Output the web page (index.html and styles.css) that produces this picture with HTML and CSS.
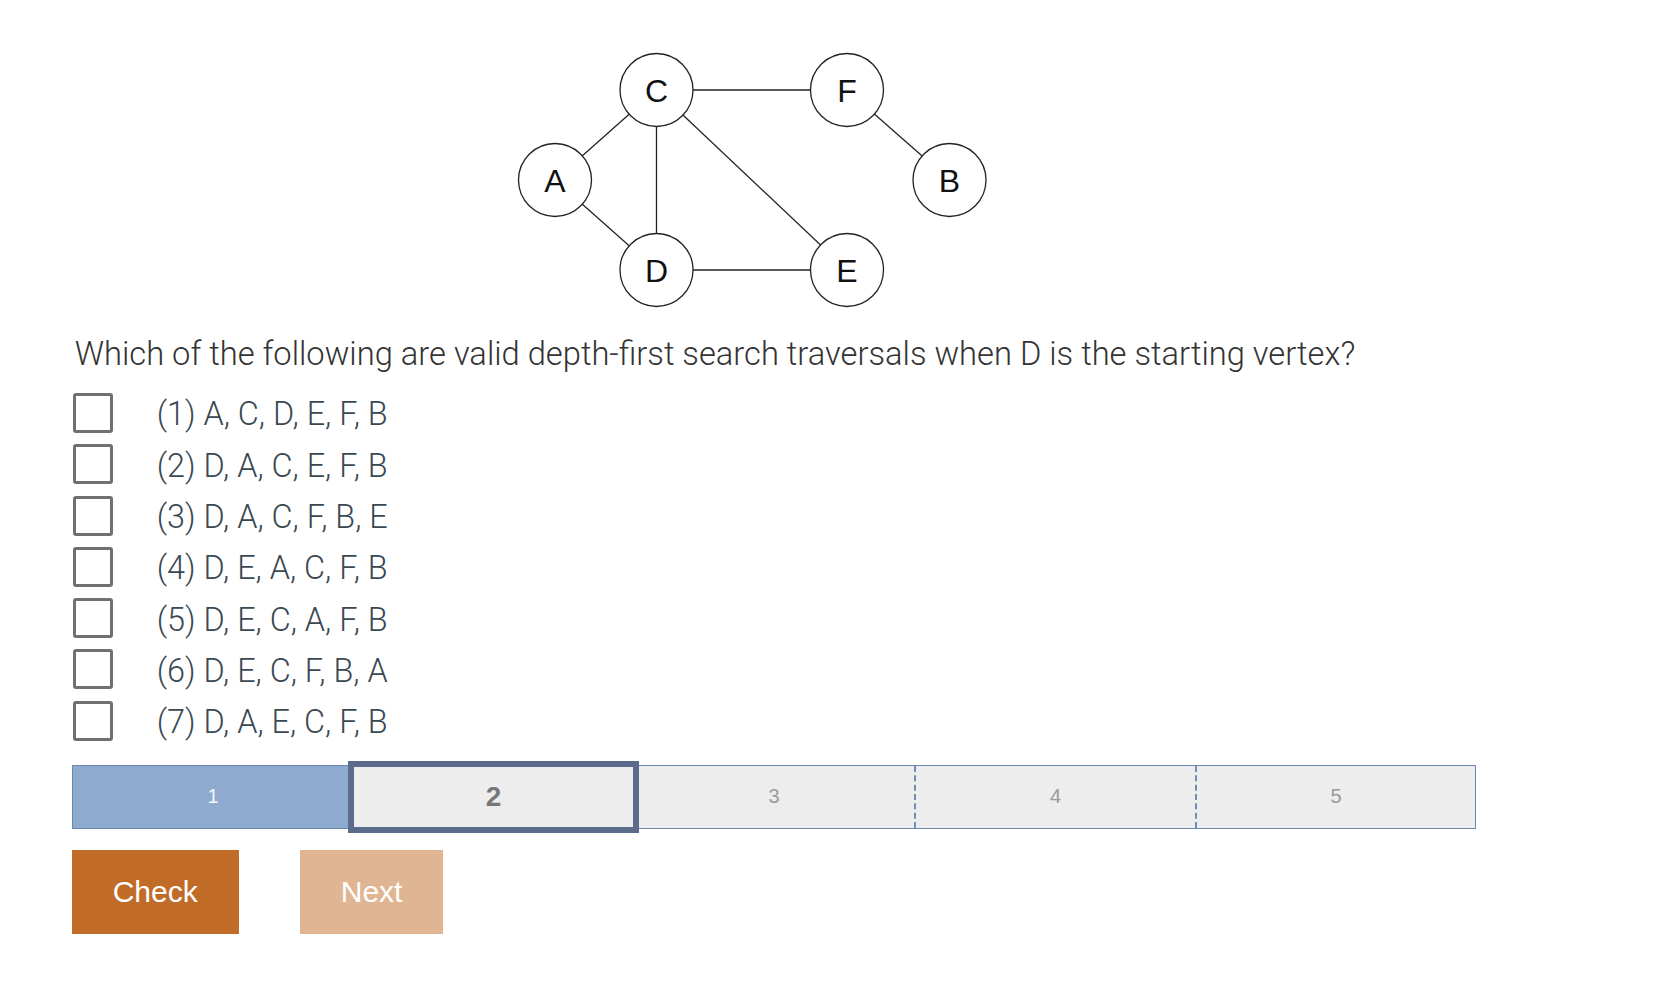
FILE: index.html
```html
<!DOCTYPE html>
<html lang="en">
<head>
<meta charset="utf-8">
<title>DFS question</title>
<link rel="stylesheet" href="styles.css">
</head>
<body>
<main class="page">
  <svg class="graph" width="480" height="265" viewBox="0 0 480 265" xmlns="http://www.w3.org/2000/svg">
    <g class="edges">
      <line x1="45" y1="132" x2="146.5" y2="42"/>
      <line x1="45" y1="132" x2="146.5" y2="222"/>
      <line x1="146.5" y1="42" x2="146.5" y2="222"/>
      <line x1="146.5" y1="42" x2="337" y2="222"/>
      <line x1="146.5" y1="42" x2="337" y2="42"/>
      <line x1="146.5" y1="222" x2="337" y2="222"/>
      <line x1="337" y1="42" x2="439.5" y2="132"/>
    </g>
    <g class="nodes">
      <circle cx="45" cy="132" r="36.5"/>
      <circle cx="146.5" cy="42" r="36.5"/>
      <circle cx="146.5" cy="222" r="36.5"/>
      <circle cx="337" cy="42" r="36.5"/>
      <circle cx="337" cy="222" r="36.5"/>
      <circle cx="439.5" cy="132" r="36.5"/>
    </g>
    <g class="labels">
      <text x="45" y="143.5">A</text>
      <text x="146.5" y="53.5">C</text>
      <text x="146.5" y="233.5">D</text>
      <text x="337" y="53.5">F</text>
      <text x="337" y="233.5">E</text>
      <text x="439.5" y="143.5">B</text>
    </g>
  </svg>

  <p class="question">Which of the following are valid depth-first search traversals when D is the starting vertex?</p>

  <ul class="options">
    <li class="option"><span class="box"></span><span class="label">(1) A, C, D, E, F, B</span></li>
    <li class="option"><span class="box"></span><span class="label">(2) D, A, C, E, F, B</span></li>
    <li class="option"><span class="box"></span><span class="label">(3) D, A, C, F, B, E</span></li>
    <li class="option"><span class="box"></span><span class="label">(4) D, E, A, C, F, B</span></li>
    <li class="option"><span class="box"></span><span class="label">(5) D, E, C, A, F, B</span></li>
    <li class="option"><span class="box"></span><span class="label">(6) D, E, C, F, B, A</span></li>
    <li class="option"><span class="box"></span><span class="label">(7) D, A, E, C, F, B</span></li>
  </ul>

  <div class="progress">
    <div class="seg done">1</div>
    <div class="seg current">2</div>
    <div class="seg todo">3</div>
    <div class="seg todo dashed">4</div>
    <div class="seg todo dashed">5</div>
  </div>

  <div class="actions">
    <button class="btn check">Check</button>
    <button class="btn next">Next</button>
  </div>
</main>
</body>
</html>
```

FILE: styles.css
```css
html, body {
  margin: 0;
  padding: 0;
  background: #ffffff;
}

.page {
  padding-left: 71.7px;
  font-family: Roboto, "Liberation Sans", sans-serif;
}

.graph {
  display: block;
  margin: 48px 0 0 438.3px;
}

.edges line {
  stroke: #222222;
  stroke-width: 1.3;
}

.nodes circle {
  fill: #ffffff;
  stroke: #222222;
  stroke-width: 1.3;
}

.labels text {
  font-family: "Liberation Sans", Arial, sans-serif;
  font-size: 32px;
  fill: #111111;
  text-anchor: middle;
}

.question {
  margin: 23px 0 0 3px;
  font-size: 32.7px;
  font-weight: 300;
  line-height: 36px;
  color: #333333;
}

.options {
  list-style: none;
  margin: 15.35px 0 0 0;
  padding: 0;
}

.option {
  display: flex;
  align-items: flex-start;
  height: 51.3px;
}

.box {
  box-sizing: border-box;
  width: 40px;
  height: 40px;
  margin-top: 5.65px;
  margin-left: 1px;
  border: 3px solid #707070;
  border-radius: 3px;
  flex: none;
}

.label {
  margin-left: 44px;
  margin-top: 11px;
  font-size: 32.4px;
  font-weight: 300;
  line-height: 32px;
  color: #3a4852;
}

.progress {
  box-sizing: border-box;
  width: 1404.5px;
  height: 64px;
  margin-top: 18.55px;
  display: grid;
  grid-template-columns: repeat(5, 1fr);
  border: 1px solid #6d88b0;
  background: #ededed;
  font-family: "Liberation Sans", Arial, sans-serif;
}

.seg {
  display: flex;
  align-items: center;
  justify-content: center;
  font-size: 20px;
  color: #9a9a9a;
}

.seg.done {
  background: #8eaacf;
  color: #f3f6fb;
}

.seg.current {
  position: relative;
  z-index: 1;
  outline: 6px solid #5b6b8b;
  outline-offset: -1px;
  font-size: 28px;
  font-weight: bold;
  color: #777777;
  background: #ededed;
}

.seg.dashed {
  border-left: 2px dashed #6f8db5;
}

.actions {
  display: flex;
  gap: 61px;
  margin-top: 21px;
}

.btn {
  height: 84px;
  padding: 0 41px;
  border: none;
  border-radius: 0;
  font-family: "Liberation Sans", Arial, sans-serif;
  font-size: 30px;
  color: #ffffff;
  cursor: pointer;
}

.btn.check {
  background: #c06c28;
}

.btn.next {
  background: #e0b593;
}
```
